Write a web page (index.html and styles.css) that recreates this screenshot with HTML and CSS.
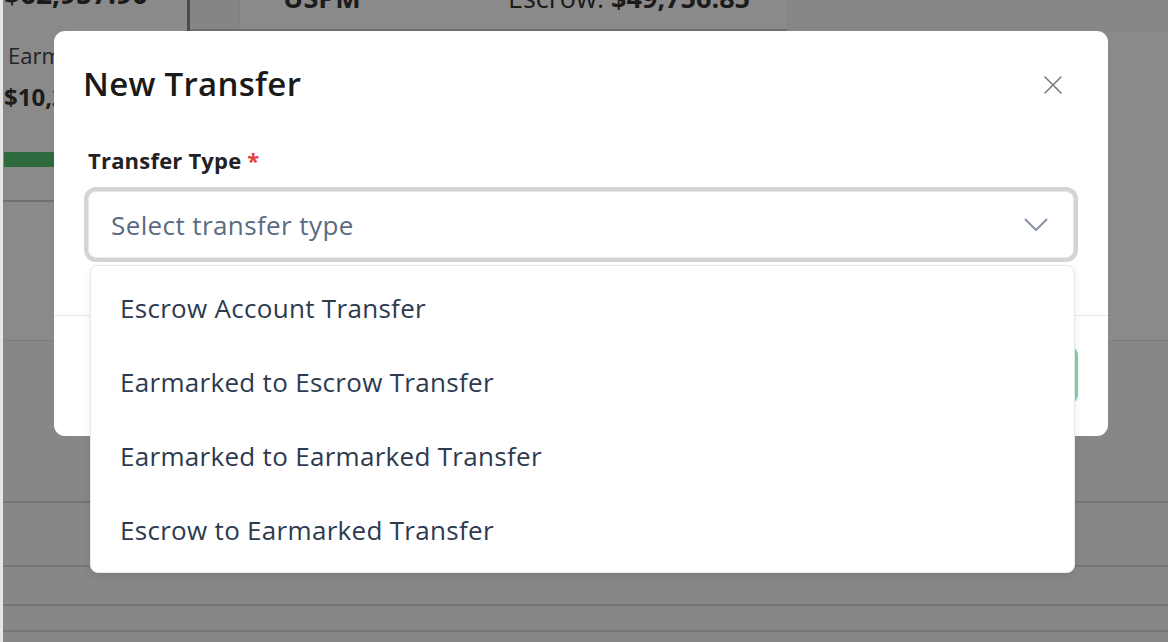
FILE: index.html
```html
<!DOCTYPE html>
<html lang="en">
<head>
<meta charset="utf-8">
<title>New Transfer</title>
<link rel="stylesheet" href="styles.css">
</head>
<body>
<div class="page">
  <div class="top-row">
    <div class="card card-one">
      <div class="amount">$62,957.90</div>
      <div class="sub-label">Earmarked</div>
      <div class="sub-amount">$10,240.00</div>
      <div class="bar"><div class="bar-fill"></div></div>
    </div>
    <div class="card card-two">
      <div class="gap-col"></div>
      <div class="uspm">USPM</div>
      <div class="escrow">Escrow: <b>$49,756.85</b></div>
    </div>
    <div class="card card-three"></div>
  </div>
  <div class="section">
    <div class="row r1"></div>
    <div class="row r2"></div>
    <div class="row r3"></div>
    <div class="row r4"></div>
  </div>
</div>

<div class="overlay"></div>

<div class="modal">
  <div class="modal-header">
    <h2 class="modal-title">New Transfer</h2>
    <button class="close-btn" aria-label="Close">
      <svg width="20" height="20" viewBox="0 0 20 20"><path d="M2 2 L18 18 M18 2 L2 18" stroke="#7a7a7a" stroke-width="1.6" fill="none" stroke-linecap="round"/></svg>
    </button>
  </div>
  <div class="modal-body">
    <label class="field-label">Transfer Type <span class="req">*</span></label>
    <div class="select-ring">
      <div class="select-box">
        <span class="placeholder">Select transfer type</span>
        <svg class="chev" width="24" height="14" viewBox="0 0 24 14"><path d="M1.5 1.5 L12 12 L22.5 1.5" stroke="#8893a5" stroke-width="2" fill="none" stroke-linecap="round" stroke-linejoin="round"/></svg>
      </div>
    </div>
  </div>
  <div class="modal-footer">
    <button class="btn-cancel">Cancel</button>
    <button class="btn-primary">Create Transfer</button>
  </div>

  <ul class="dropdown">
    <li class="option">Escrow Account Transfer</li>
    <li class="option">Earmarked to Escrow Transfer</li>
    <li class="option">Earmarked to Earmarked Transfer</li>
    <li class="option">Escrow to Earmarked Transfer</li>
  </ul>
</div>
</body>
</html>
```

FILE: styles.css
```css
* { box-sizing: border-box; }
html, body { margin: 0; padding: 0; }
body {
  width: 1168px;
  height: 642px;
  overflow: hidden;
  font-family: "Open Sans", "Noto Sans", sans-serif;
  background: #e6e6e6;
  position: relative;
}

.page {
  margin-left: 3px;
  margin-top: -26px;
  background: #ffffff;
  height: 700px;
}

.top-row {
  display: flex;
  height: 228px;
}
.card { background: #ffffff; }
.card-one {
  width: 187px;
  background: #ffffff;
  border-right: 3px solid #8a8a8a;
  border-bottom: 2px solid #cfcfcf;
  padding-left: 1px;
}
.amount {
  font-size: 28px;
  font-weight: 700;
  color: #333;
  line-height: 30px;
  margin-top: 4px;
}
.sub-label {
  font-size: 22px;
  color: #444;
  margin-top: 32px;
  line-height: 30px;
  padding-left: 4px;
}
.sub-amount {
  font-size: 24px;
  font-weight: 700;
  color: #333;
  margin-top: 12px;
  line-height: 30px;
}
.bar {
  margin-top: 40px;
  height: 15px;
  background: #e2e2e2;
}
.bar-fill { width: 100%; height: 100%; background: #55c474; }

.card-two {
  width: 597px;
  height: 57px;
  display: flex;
  align-items: flex-end;
  border-bottom: 2px solid #cccccc;
  background: #ffffff;
}
.gap-col {
  width: 50px;
  height: 100%;
  background: #f6f6f6;
  border-right: 1px solid #ececec;
}
.uspm {
  font-size: 27px;
  font-weight: 700;
  color: #333;
  margin-left: 43px;
  width: 225px;
  line-height: 30px;
  margin-bottom: 16px;
}
.escrow {
  font-size: 27px;
  color: #333;
  line-height: 30px;
  margin-bottom: 16px;
}
.card-three {
  flex: 1;
  height: 57px;
  background: #f8f8f8;
}

.section {
  margin-top: 138px;
  border-top: 1px solid #e8e8e8;
  background: #fafafa;
  height: 340px;
  display: flex;
  flex-direction: column;
}
.row { border-bottom: 2px solid #d8d8e0; }
.r1 { height: 162px; }
.r2 { height: 64px; }
.r3 { height: 39px; }
.r4 { height: 26px; }

.overlay {
  position: absolute;
  left: 3px; top: 0; right: 0; bottom: 0;
  background: rgba(0,0,0,0.46);
}

.modal {
  position: absolute;
  left: 54px;
  top: 31px;
  width: 1054px;
  height: 405px;
  background: #ffffff;
  border-radius: 11px;
  display: flex;
  flex-direction: column;
}

.modal-header {
  display: flex;
  justify-content: space-between;
  align-items: flex-start;
  padding: 33px 45px 0 29px;
  height: 108px;
}
.modal-title {
  margin: 0;
  font-size: 33px;
  line-height: 40px;
  font-weight: 600;
  color: #1a1a1a;
  letter-spacing: 0.3px;
}
.close-btn {
  margin-top: 11px;
  background: none;
  border: 0;
  padding: 0;
  width: 20px;
  height: 20px;
  cursor: pointer;
}

.modal-body {
  padding: 6px 30px 0 30px;
  height: 177px;
  border-bottom: 1px solid #e4e7ec;
}
.field-label {
  display: block;
  font-size: 22px;
  line-height: 30px;
  font-weight: 700;
  color: #222;
  padding-left: 4px;
  letter-spacing: 0.2px;
}
.req { color: #e53e3e; }
.select-ring {
  margin-top: 12px;
  border-radius: 12px;
  background: #d4d4d4;
  padding: 4px;
}
.select-box {
  height: 67px;
  border-radius: 8px;
  background: #ffffff;
  border: 1px solid #e2e8f0;
  display: flex;
  align-items: center;
  justify-content: space-between;
  padding: 0 25px 0 22px;
}
.placeholder {
  font-size: 26px;
  color: #5a6a82;
  letter-spacing: 0.4px;
}
.chev { display: block; }

.modal-footer {
  flex: 1;
  display: flex;
  justify-content: flex-end;
  align-items: flex-start;
  gap: 14px;
  padding: 31px 30px 0 30px;
}
.btn-cancel {
  height: 56px;
  padding: 0 24px;
  border-radius: 8px;
  border: 1px solid #d0d5dd;
  background: #fff;
  font-family: inherit;
  font-size: 20px;
}
.btn-primary {
  height: 56px;
  padding: 0 28px;
  border-radius: 8px;
  border: 0;
  background: #7dd69b;
  color: #fff;
  font-family: inherit;
  font-size: 20px;
}

.dropdown {
  position: absolute;
  left: 36px;
  top: 234px;
  width: 985px;
  margin: 0;
  padding: 5px 0;
  list-style: none;
  background: #ffffff;
  border: 1px solid #e4e8f0;
  border-radius: 8px;
  box-shadow: 0 4px 10px rgba(0,0,0,0.08);
}
.option {
  height: 74px;
  line-height: 74px;
  padding-left: 29px;
  font-size: 26px;
  color: #2d3a4f;
  letter-spacing: 0.3px;
}
```
